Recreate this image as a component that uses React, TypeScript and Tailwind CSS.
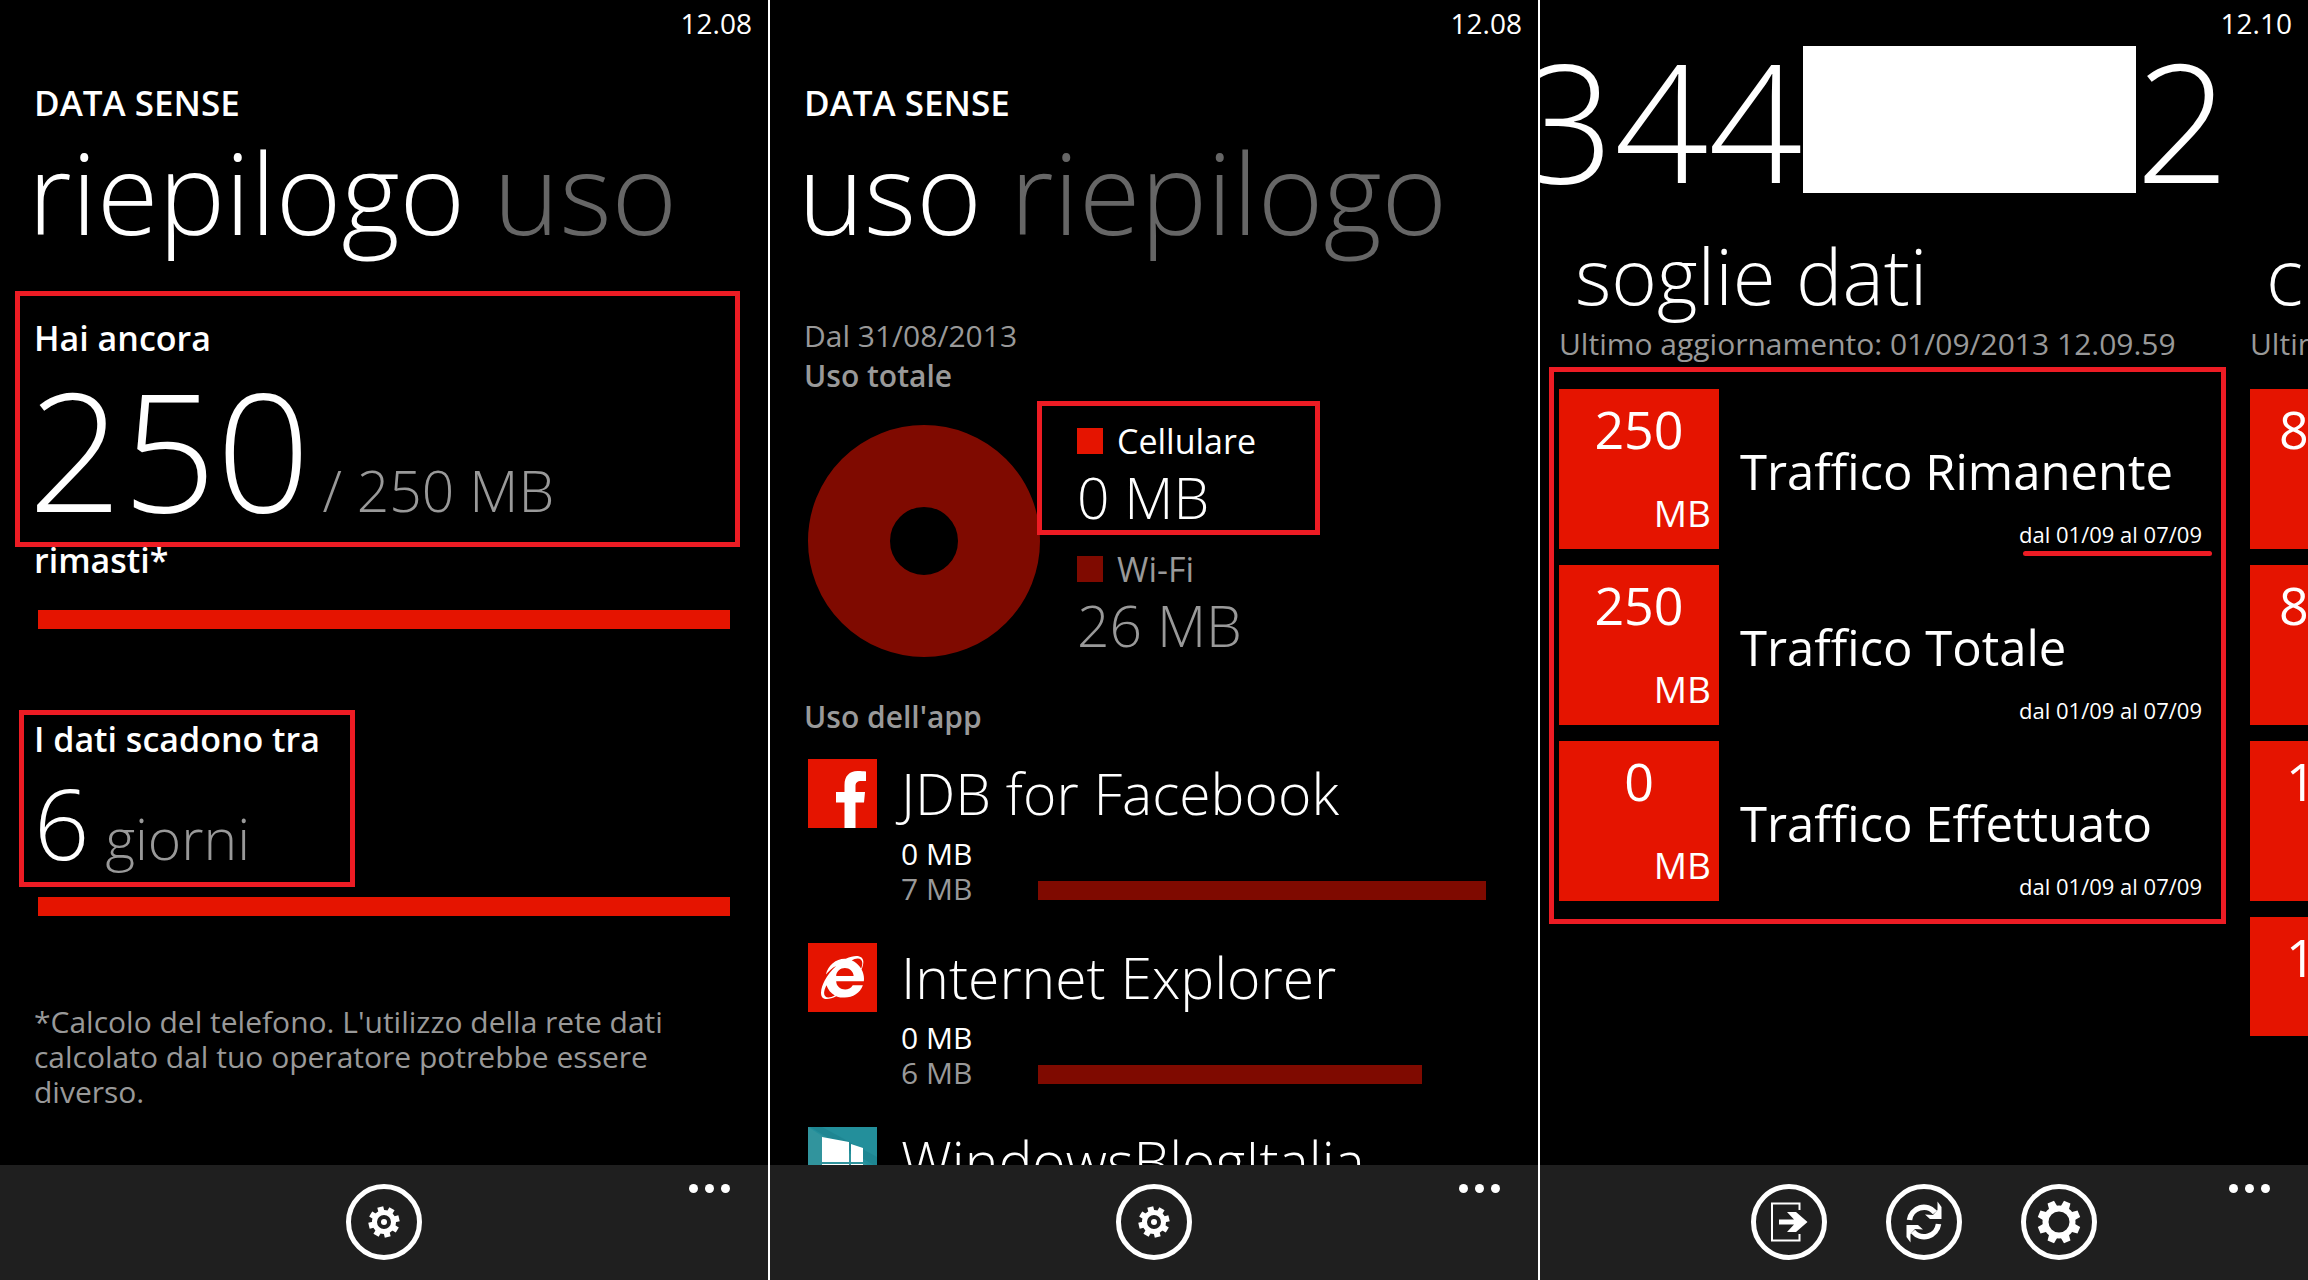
import React from 'react';
import { FaInternetExplorer } from 'react-icons/fa';

type AppUsage = {
  name: string;
  cellular: number;
  wifi: number;
  icon: React.ReactNode;
};

const FacebookTile = () => (
  <svg viewBox="0 0 69 69" className="size-[69px] shrink-0 bg-[#e51400]" aria-hidden="true">
    <path
      fill="#fff"
      d="M36.5 69V43.5H28V33h8.5v-7c0-9 5-14 13-14 3.5 0 6 .2 8.5.6V22h-4.5c-4.5 0-6 2-6 5v6H57l-1 10.5h-8.5V69z"
    />
  </svg>
);

const ExplorerTile = () => (
  <div className="flex size-[69px] shrink-0 items-center justify-center bg-[#e51400]">
    <FaInternetExplorer className="size-[43px]" aria-hidden="true" />
  </div>
);

const WindowsTile = () => (
  <svg viewBox="0 0 69 69" className="size-[69px] shrink-0 bg-[#238f9b]" aria-hidden="true">
    <path fill="#3a989f" d="M0 0l69 44v25H0z" opacity=".6" />
    <path fill="#1c828e" d="M2 0h12l55 30v10z" opacity=".7" />
    <path fill="#fff" d="M14 10l27 5v20H14zM43 17l12 4v14H43zM14 37h27v20l-27 5zM43 37h12v14l-12 4z" />
  </svg>
);

const apps: AppUsage[] = [
  { name: 'JDB for Facebook', cellular: 0, wifi: 7, icon: <FacebookTile /> },
  { name: 'Internet Explorer', cellular: 0, wifi: 6, icon: <ExplorerTile /> },
  { name: 'WindowsBlogItalia', cellular: 0, wifi: 5, icon: <WindowsTile /> },
];

const maxWifi = Math.max(...apps.map((a) => a.wifi));

const thresholds = [
  { value: '250', label: 'Traffico Rimanente', marked: true },
  { value: '250', label: 'Traffico Totale', marked: false },
  { value: '0', label: 'Traffico Effettuato', marked: false },
];

const TEETH = [0, 45, 90, 135, 180, 225, 270, 315];

const SmallGear = () => (
  <svg viewBox="-33 -33 66 66" className="size-full" aria-hidden="true">
    <g transform="rotate(-14)">
      {TEETH.map((a) => (
        <rect key={a} x="-3" y="-15.5" width="6" height="7" fill="#fff" transform={`rotate(${a})`} />
      ))}
    </g>
    <circle r="9.5" fill="none" stroke="#fff" strokeWidth="5" />
    <circle r="3" fill="#fff" />
  </svg>
);

const LargeGear = () => (
  <svg viewBox="-33 -33 66 66" className="size-full" aria-hidden="true">
    <g transform="rotate(22.5)">
      {TEETH.map((a) => (
        <path key={a} d="M-4.5 -14L-3.5 -21.5H3.5L4.5 -14Z" fill="#fff" transform={`rotate(${a})`} />
      ))}
    </g>
    <circle r="13.5" fill="none" stroke="#fff" strokeWidth="6" />
  </svg>
);

const ExitIcon = () => (
  <svg viewBox="-33 -33 66 66" className="size-full" aria-hidden="true">
    <path d="M10.5 -12V-18.5H-17V18.5H10.5V12" fill="none" stroke="#fff" strokeWidth="2" />
    <path d="M-10 -2.5H5L-2 -10H7L18.5 0L7 10H-2L5 2.5H-10Z" fill="#fff" />
  </svg>
);

const SyncIcon = () => (
  <svg viewBox="-33 -33 66 66" className="size-full" aria-hidden="true">
    {[0, 180].map((a) => (
      <g key={a} transform={`rotate(${a})`}>
        <path d="M-14.5 -2A14.5 14.5 0 0 1 11 -9.5" fill="none" stroke="#fff" strokeWidth="5.5" />
        <path d="M13.5 -20.5L17.5 -15V-3H6L1 -7.5L9 -7L13.5 -12Z" fill="#fff" />
      </g>
    ))}
  </svg>
);

function Highlight({ className }: { className: string }) {
  return <div className={`pointer-events-none absolute z-10 border-5 border-[#ed1c24] ${className}`} />;
}

function Screen({
  time,
  actions,
  children,
}: {
  time: string;
  actions: { label: string; icon: React.ReactNode }[];
  children: React.ReactNode;
}) {
  return (
    <section className="flex min-h-0 min-w-0 flex-col overflow-hidden bg-black">
      <div className="px-4 text-right text-[28px] leading-[46px]">{time}</div>
      <div className="min-h-0 flex-1 overflow-hidden">{children}</div>
      <footer className="relative flex h-[115px] shrink-0 justify-center gap-[59px] bg-[#1f1f1f] pt-[19px]">
        {actions.map((action) => (
          <button key={action.label} aria-label={action.label} className="size-[76px] rounded-full border-5 border-white">
            {action.icon}
          </button>
        ))}
        <button aria-label="Altro" className="absolute top-[19px] right-[38px] flex gap-[7px]">
          <span className="size-[9px] rounded-full bg-white" />
          <span className="size-[9px] rounded-full bg-white" />
          <span className="size-[9px] rounded-full bg-white" />
        </button>
      </footer>
    </section>
  );
}

function PivotHeader({ active, inactive }: { active: string; inactive: string }) {
  return (
    <header className="pt-[37px]">
      <h1 className="pl-[34px] text-[35px] leading-10 font-semibold">DATA SENSE</h1>
      <nav className="mt-[9px] flex gap-7 pl-7 text-[112px] leading-[120px] font-light whitespace-nowrap">
        <button>{active}</button>
        <button className="text-[#666]">{inactive}</button>
      </nav>
    </header>
  );
}

function Summary() {
  return (
    <>
      <PivotHeader active="riepilogo" inactive="uso" />
      <div className="relative mt-[66px]">
        <Highlight className="-top-[27px] right-7 -bottom-[13px] left-[15px]" />
        <p className="pl-[34px] text-[34px] leading-10 font-semibold">Hai ancora</p>
        <p className="mt-[5px] flex items-baseline gap-3 pl-7 font-light">
          <span className="text-[165px] leading-[170px]">250</span>
          <span className="text-[57px] text-[#999]">/ 250 MB</span>
        </p>
      </div>
      <p className="mt-[6px] pl-[34px] text-[34px] leading-10 font-semibold">rimasti*</p>
      <div className="mx-[38px] mt-[30px] h-[19px] bg-[#e51400]" />
      <div className="mt-[90px] flex pl-[19px]">
        <div className="relative pr-[35px] pl-[15px]">
          <Highlight className="-top-[9px] right-0 -bottom-[15px] left-0" />
          <p className="text-[34px] leading-10 font-semibold">I dati scadono tra</p>
          <p className="mt-[13px] flex items-baseline gap-4 font-light">
            <span className="text-[97px] leading-[100px]">6</span>
            <span className="text-[57px] leading-[60px] text-[#999]">giorni</span>
          </p>
        </div>
      </div>
      <div className="mx-[38px] mt-[25px] h-[19px] bg-[#e51400]" />
      <p className="mt-[88px] pr-[60px] pl-[34px] text-[30px] leading-[35px] text-[#999]">
        *Calcolo del telefono. L'utilizzo della rete dati calcolato dal tuo operatore potrebbe essere diverso.
      </p>
    </>
  );
}

function Usage() {
  return (
    <>
      <PivotHeader active="uso" inactive="riepilogo" />
      <div className="mt-[64px] pl-[34px] text-[30px] leading-10 text-[#999]">
        <p>Dal 31/08/2013</p>
        <h2 className="font-semibold">Uso totale</h2>
      </div>
      <div className="mt-[25px] flex items-start gap-[37px] pl-[38px]">
        <svg viewBox="0 0 232 232" className="mt-1 size-[232px] shrink-0" aria-hidden="true">
          <circle cx="116" cy="116" r="75" fill="none" stroke="#7f0a00" strokeWidth="82" />
        </svg>
        <div>
          <div className="relative">
            <Highlight className="-top-5 -right-16 -bottom-2 -left-10" />
            <p className="flex items-center gap-[14px] text-[34px] leading-10">
              <span className="size-[26px] bg-[#e51400]" />
              Cellulare
            </p>
            <p className="mt-[6px] text-[57px] leading-[60px] font-light">0 MB</p>
          </div>
          <div className="mt-[22px] text-[#999]">
            <p className="flex items-center gap-[14px] text-[34px] leading-10">
              <span className="size-[26px] bg-[#7f0a00]" />
              Wi-Fi
            </p>
            <p className="mt-[6px] text-[57px] leading-[60px] font-light">26 MB</p>
          </div>
        </div>
      </div>
      <h2 className="mt-10 pl-[34px] text-[30px] leading-10 font-semibold text-[#999]">Uso dell'app</h2>
      <ul className="mt-[22px] flex flex-col gap-[37px] pr-[52px] pl-[38px]">
        {apps.map((app) => (
          <li key={app.name} className="flex gap-6">
            {app.icon}
            <div className="min-w-0 flex-1">
              <h3 className="text-[57px] leading-[68px] font-light whitespace-nowrap">{app.name}</h3>
              <p className="mt-[9px] text-[30px] leading-[35px]">{app.cellular} MB</p>
              <div className="flex items-center text-[30px] leading-[35px] text-[#999]">
                <span className="w-[137px] shrink-0">{app.wifi} MB</span>
                <div className="flex-1 pt-1">
                  <div className="h-[19px] bg-[#7f0a00]" style={{ width: `${(app.wifi / maxWifi) * 100}%` }} />
                </div>
              </div>
            </div>
          </li>
        ))}
      </ul>
    </>
  );
}

function PaneHeader({ title, updated }: { title: string; updated: string }) {
  return (
    <header className="whitespace-nowrap">
      <h2 className="pl-4 text-[78px] leading-[84px] font-light">{title}</h2>
      <p className="mt-[7px] text-[30px] leading-10 text-[#999]">{updated}</p>
    </header>
  );
}

function Thresholds() {
  return (
    <>
      <div className="flex text-[165px] leading-[147px] font-light">
        <span className="-ml-5">344</span>
        <span className="h-[147px] w-[333px] bg-white" />
        <span>2</span>
      </div>
      <div className="mt-10 flex pl-[19px]">
        <div className="w-[691px] shrink-0 pr-12">
          <PaneHeader title="soglie dati" updated="Ultimo aggiornamento: 01/09/2013 12.09.59" />
          <ul className="relative mt-[25px] flex flex-col gap-4">
            <Highlight className="-top-[22px] -right-6 -bottom-[23px] -left-[10px]" />
            {thresholds.map((item) => (
              <li key={item.label} className="flex gap-[21px]">
                <div className="flex size-40 shrink-0 flex-col justify-between bg-[#e51400] pt-[10px] pr-2 pb-4">
                  <span className="pl-2 text-center text-[52px] leading-[60px]">{item.value}</span>
                  <span className="text-right text-[37px] leading-10">MB</span>
                </div>
                <div className="flex flex-1 flex-col pt-[52px]">
                  <h3 className="text-[49px] leading-[60px] whitespace-nowrap">{item.label}</h3>
                  <p className="relative mt-[19px] self-end text-[22px] leading-7">
                    dal 01/09 al 07/09
                    {item.marked && (
                      <span className="absolute top-[31px] -right-[10px] left-1 h-[5px] rounded-full bg-[#ed1c24]" />
                    )}
                  </p>
                </div>
              </li>
            ))}
          </ul>
        </div>
        <div className="w-[691px] shrink-0">
          <PaneHeader title="credito" updated="Ultimo aggiornamento" />
          <ul className="mt-[25px] flex flex-col gap-4 text-[52px] leading-[60px]">
            <li className="h-40 w-40 bg-[#e51400] pt-[10px] pl-[29px]">8</li>
            <li className="h-40 w-40 bg-[#e51400] pt-[10px] pl-[29px]">8</li>
            <li className="h-40 w-40 bg-[#e51400] pt-[10px] pl-9">1</li>
            <li className="h-[119px] w-40 bg-[#e51400] pt-[10px] pl-9">1</li>
          </ul>
        </div>
      </div>
    </>
  );
}

export default function App() {
  const settings = { label: 'Impostazioni', icon: <SmallGear /> };

  return (
    <main className="grid h-screen grid-cols-3 gap-[2px] overflow-hidden bg-white font-['Open_Sans','Noto_Sans',sans-serif] text-white">
      <Screen time="12.08" actions={[settings]}>
        <Summary />
      </Screen>
      <Screen time="12.08" actions={[settings]}>
        <Usage />
      </Screen>
      <Screen
        time="12.10"
        actions={[
          { label: 'Esci', icon: <ExitIcon /> },
          { label: 'Aggiorna', icon: <SyncIcon /> },
          { label: 'Impostazioni', icon: <LargeGear /> },
        ]}
      >
        <Thresholds />
      </Screen>
    </main>
  );
}
